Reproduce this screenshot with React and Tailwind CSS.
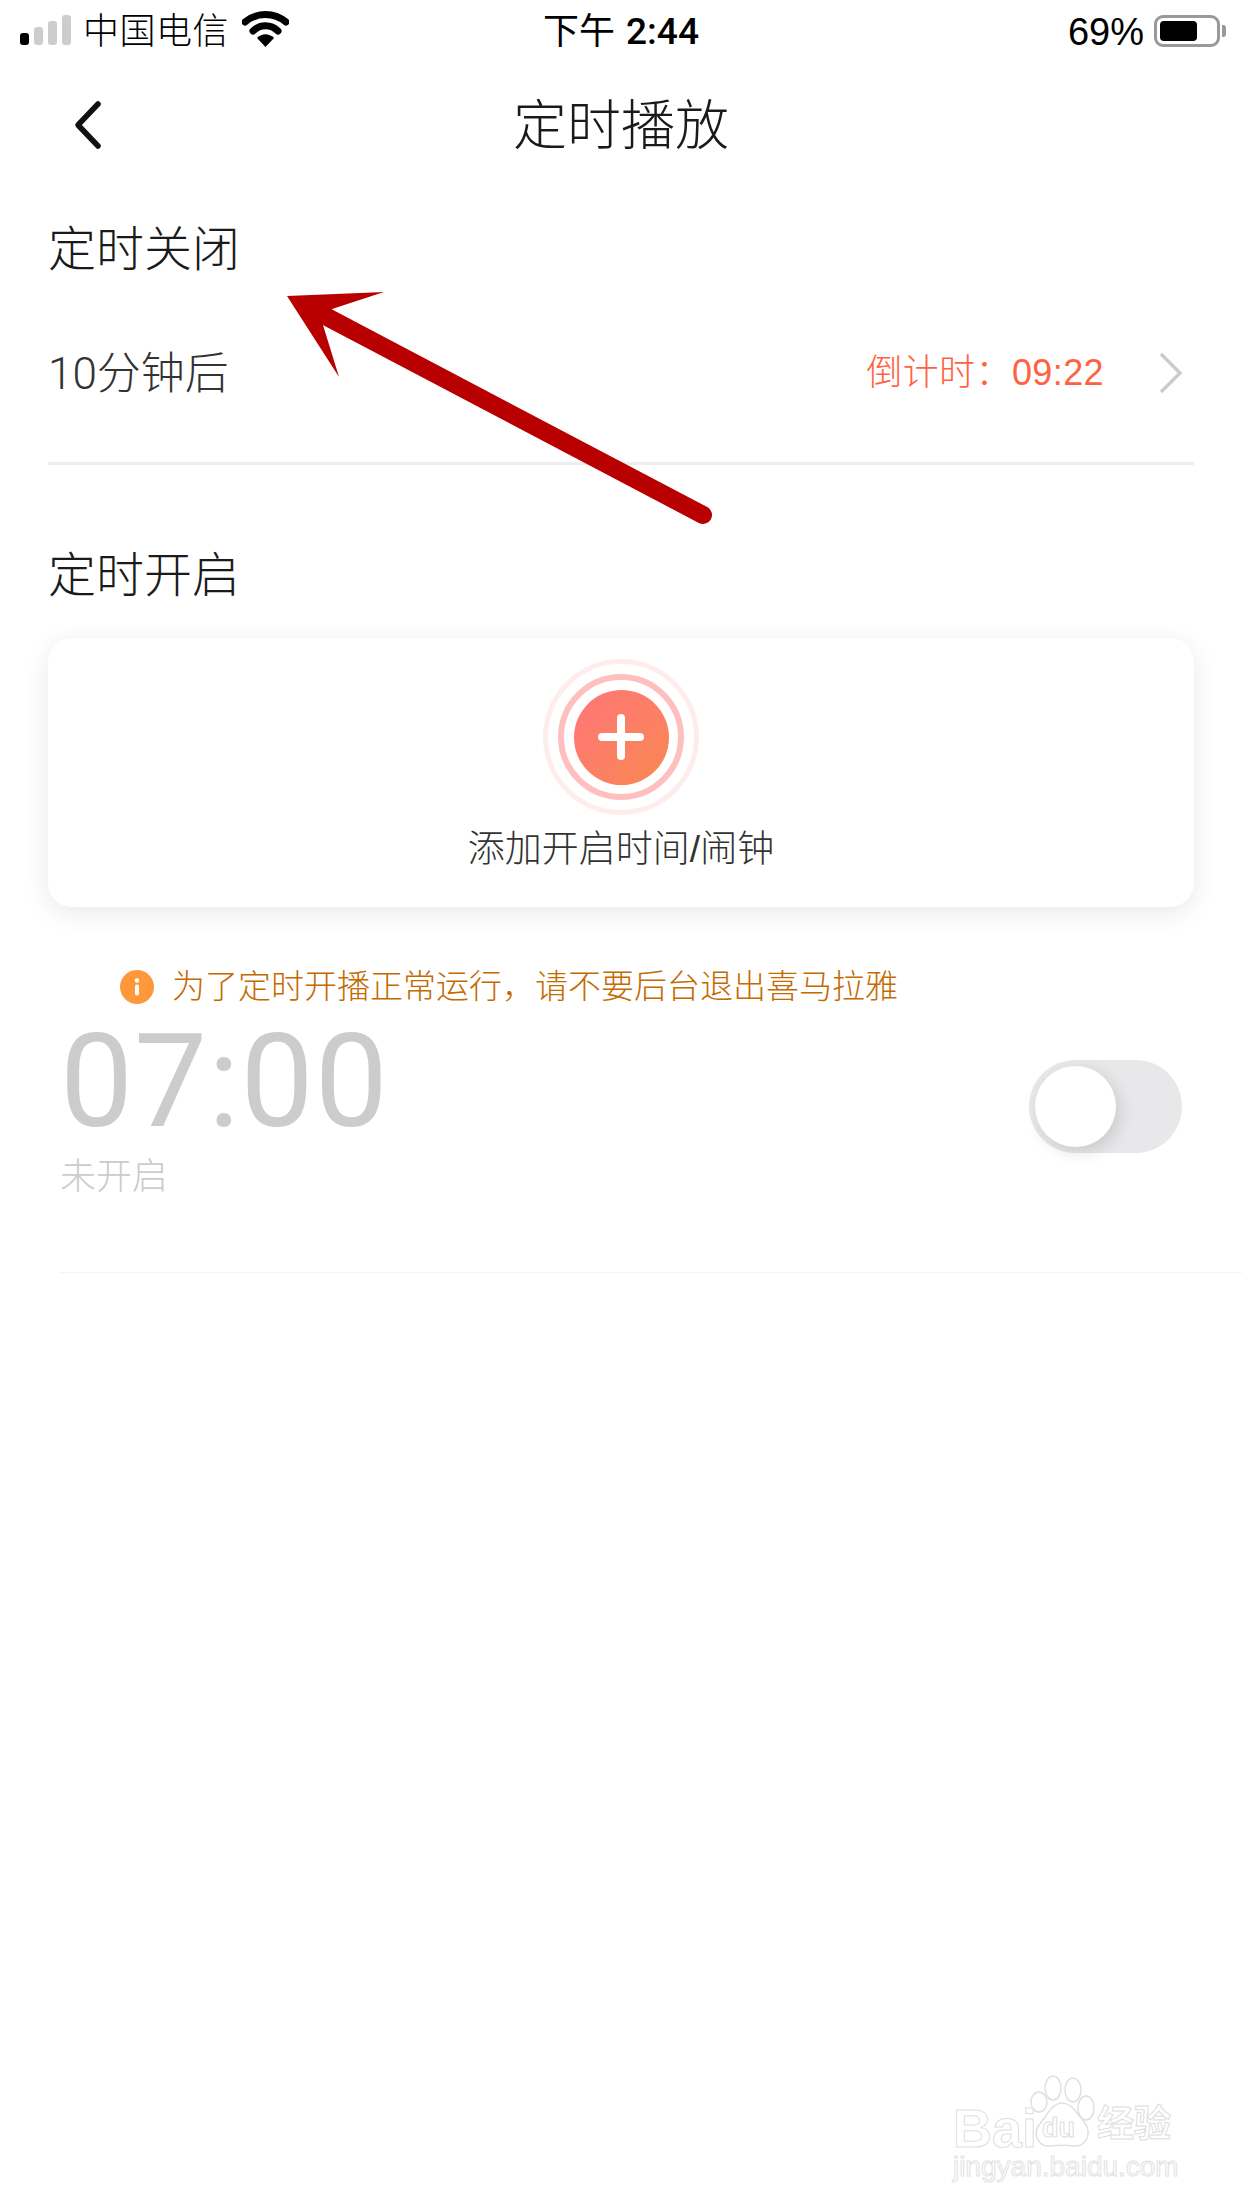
const FONT = "font-['Liberation_Sans','Noto_Sans_CJK_SC',sans-serif]";

function StatusBar() {
  return (
    <div className="grid grid-cols-3 h-[62px] items-center text-black">
      {/* left: signal + carrier + wifi */}
      <div className="flex items-center pl-[20px]">
        <div className="flex items-end gap-[5px] h-[30px] mt-[-2px]">
          <div className="w-[9px] h-[12px] rounded-[3px] bg-black" />
          <div className="w-[9px] h-[18px] rounded-[3px] bg-[#cdcdcd]" />
          <div className="w-[9px] h-[24px] rounded-[3px] bg-[#cdcdcd]" />
          <div className="w-[9px] h-[30px] rounded-[3px] bg-[#cdcdcd]" />
        </div>
        <span className="ml-[12px] pt-[2px] text-[36px] leading-[44px] tracking-[0.5px] font-light">中国电信</span>
        <svg className="ml-[13px] mt-[-4px]" width="47" height="36" viewBox="0 0 47 36">
          <path d="M3 11 C15 1 32 1 44 11" fill="none" stroke="#000" strokeWidth="7" strokeLinecap="round" />
          <path d="M11 20 C18 13 29 13 36 20" fill="none" stroke="#000" strokeWidth="7" strokeLinecap="round" />
          <path d="M15 27 C20 22 27 22 32 27 L23.5 36 Z" fill="#000" />
        </svg>
      </div>
      {/* center: time */}
      <div className="flex justify-center pt-[2px]">
        <span className="text-[36px] leading-[44px] font-normal">下午</span>
        <span className="ml-[11px] text-[37px] leading-[44px] font-['Roboto',sans-serif] font-medium">2:44</span>
      </div>
      {/* right: battery */}
      <div className="flex items-center justify-end pr-[16px]">
        <span className="pt-[2px] text-[38px] leading-[44px]">69%</span>
        <div className="ml-[10px] w-[66px] h-[32px] rounded-[9px] border-[3px] border-[#999999] p-[3px]">
          <div className="w-[37px] h-full rounded-[4px] bg-black" />
        </div>
        <div className="ml-[2px] w-[4px] h-[12px] rounded-r-[3px] bg-[#999999]" />
      </div>
    </div>
  );
}

function AddIcon() {
  return (
    <div className="flex items-center justify-center w-[156px] h-[156px] rounded-full border-[5px] border-[#ffecec]">
      <div className="flex items-center justify-center w-[126px] h-[126px] rounded-full border-[6px] border-[#ffbfbf]">
        <div className="flex items-center justify-center w-[95px] h-[95px] rounded-full bg-linear-to-br from-[#ff7577] to-[#f98850]">
          <svg width="46" height="46" viewBox="0 0 46 46">
            <path d="M23 4 V42 M4 23 H42" stroke="#fff" strokeWidth="8" strokeLinecap="round" />
          </svg>
        </div>
      </div>
    </div>
  );
}

function Toggle() {
  return (
    <div className="flex items-center w-[153px] h-[93px] rounded-full bg-[#e8e8ea] pl-[6px]">
      <div className="w-[81px] h-[81px] rounded-full bg-white shadow-[4px_5px_16px_rgba(0,0,0,0.13)]" />
    </div>
  );
}

function Watermark() {
  return (
    <div className="absolute left-[953px] top-[2075px] w-[225px] text-white">
      <div className="relative h-[72px]">
        <span className="absolute left-0 bottom-[-4px] text-[54px] leading-[46px] font-bold [-webkit-text-stroke:1px_#dedede]">Bai</span>
        <svg className="absolute left-[77px] top-0" width="65" height="72" viewBox="0 0 65 72" fill="#fff" stroke="#e0e0e0" strokeWidth="1.5">
          <ellipse cx="9" cy="27" rx="8" ry="10" />
          <ellipse cx="23" cy="13" rx="8" ry="12" />
          <ellipse cx="43" cy="15" rx="8" ry="12" />
          <ellipse cx="56" cy="33" rx="8" ry="12" />
          <path d="M32 28 C42 28 48 40 55 48 C63 60 54 72 44 71 C36 70 28 70 20 71 C9 72 2 60 9 50 C16 42 22 28 32 28 Z" />
        </svg>
        <span className="absolute left-[89px] bottom-[3px] text-[27px] leading-[32px] font-bold [-webkit-text-stroke:1px_#dedede]">du</span>
        <span className="absolute left-[144px] bottom-0 text-[37px] leading-[44px] font-bold [-webkit-text-stroke:1px_#dedede]">经验</span>
      </div>
      <div className="mt-[5px] text-[28px] leading-[30px] whitespace-nowrap [-webkit-text-stroke:1px_#e2e2e2]">jingyan.baidu.com</div>
    </div>
  );
}

export default function App() {
  return (
    <div className={`relative w-[1242px] h-[2208px] overflow-hidden bg-white ${FONT}`}>
      <StatusBar />

      {/* nav */}
      <div className="relative flex items-center justify-center h-[126px] pt-[2px]">
        <svg className="absolute left-[72px] top-[38px]" width="32" height="50" viewBox="0 0 32 50">
          <path d="M26 4 L6 25 L26 46" fill="none" stroke="#111" strokeWidth="5.5" strokeLinecap="round" strokeLinejoin="round" />
        </svg>
        <h1 className="text-[54px] leading-[64px] font-light text-[#1a1a1a]">定时播放</h1>
      </div>

      {/* timer off */}
      <div className="h-[122px] flex items-center pl-[48px] pt-[2px] text-[48px] font-light text-[#1a1a1a]">定时关闭</div>
      <div className="flex items-center justify-between h-[126px] pl-[48px] pr-[58px]">
        <span className="pt-[2px] text-[44px] font-['Roboto','Noto_Sans_CJK_SC',sans-serif] font-light text-[#333333]">10分钟后</span>
        <div className="flex items-center">
          <span className="text-[36px] tracking-[0.4px] font-light text-[#ff6242]">{"倒计时\uFF1A09:22"}</span>
          <svg className="ml-[54px]" width="26" height="44" viewBox="0 0 26 44">
            <path d="M3 3 L22 22 L3 41" fill="none" stroke="#cccccc" strokeWidth="3.5" />
          </svg>
        </div>
      </div>
      <div className="mt-[26px] mx-[48px] h-[3px] bg-[#eeeeee]" />

      {/* timer on */}
      <div className="mt-[74px] h-[70px] flex items-center pl-[48px] pt-[4px] text-[48px] font-light text-[#1a1a1a]">定时开启</div>
      <div className="mt-[29px] mx-[48px] h-[269px] rounded-[24px] bg-white shadow-[0_6px_26px_rgba(0,0,0,0.09)] flex flex-col items-center pt-[21px]">
        <AddIcon />
        <div className="mt-[13px] text-[37px] leading-[44px] font-light text-[#333333]">添加开启时间/闹钟</div>
      </div>

      <div className="mt-[60px] flex items-center h-[40px] pl-[120px]">
        <svg width="34" height="34" viewBox="0 0 34 34">
          <circle cx="17" cy="17" r="17" fill="#ff983a" />
          <circle cx="17" cy="10.5" r="2.2" fill="#fff" />
          <rect x="15" y="14.5" width="4" height="11" rx="2" fill="#fff" />
        </svg>
        <span className="ml-[18px] text-[33px] leading-[40px] font-light text-[#c46a00]">{"为了定时开播正常运行\uFF0C请不要后台退出喜马拉雅"}</span>
      </div>

      {/* alarm row */}
      <div className="ml-[60px] h-[266px] flex justify-between pr-[60px] border-b border-[#f5f5f5]">
        <div className="pt-[20px]">
          <div className="text-[130px] leading-[110px] tracking-[1px] font-['Roboto',sans-serif] font-normal text-[#cccccc]">07:00</div>
          <div className="mt-[20px] text-[36px] leading-[40px] font-light text-[#cccccc]">未开启</div>
        </div>
        <div className="pt-[53px]">
          <Toggle />
        </div>
      </div>

      {/* red arrow drawn over the screenshot */}
      <svg className="absolute left-0 top-0 pointer-events-none" width="1242" height="700" viewBox="0 0 1242 700">
        <path d="M287 296 L384 292 L332 309 L323 325 L339 377 Z" fill="#b90000" />
        <path d="M327 317 L703 515" stroke="#b90000" strokeWidth="18" strokeLinecap="round" fill="none" />
      </svg>

      <Watermark />
    </div>
  );
}
